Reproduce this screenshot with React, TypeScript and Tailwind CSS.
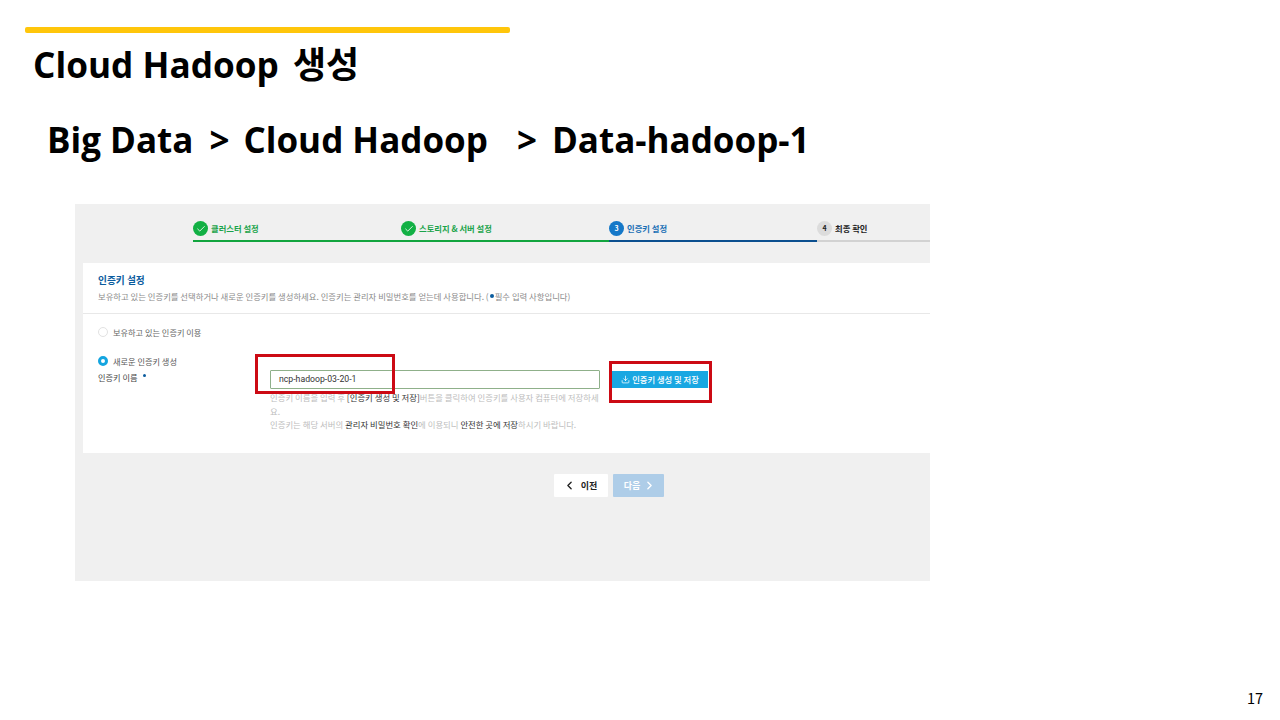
import { Check, ChevronLeft, ChevronRight, Download } from 'lucide-react';

const font = { fontFamily: '"Noto Sans CJK KR", sans-serif' };
const headFont = { fontFamily: '"Open Sans", "Noto Sans CJK KR", sans-serif' };

function Step({ label, state, num }: { label: string; state: 'done' | 'active' | 'todo'; num?: number }) {
  const line = state === 'done' ? 'border-[#12a53f]' : state === 'active' ? 'border-[#0b4f8f]' : 'border-[#d2d2d2]';
  const text = state === 'done' ? 'text-[#1aa34a]' : state === 'active' ? 'text-[#1a6fb5]' : 'text-[#222]';
  return (
    <div className={`flex h-[38px] w-[208px] shrink-0 items-start gap-[3px] border-b-2 pt-[17px] ${line}`}>
      {state === 'done' ? (
        <span className="flex h-[15px] w-[15px] items-center justify-center rounded-full bg-[#12b044] text-white">
          <Check size={10} strokeWidth={2} />
        </span>
      ) : (
        <span className={`flex h-[15px] w-[15px] items-center justify-center rounded-full text-[7px] font-bold ${state === 'active' ? 'bg-[#1578c8] text-white' : 'bg-[#dcdcdc] text-[#222]'}`}>
          {num}
        </span>
      )}
      <span className={`text-[8.3px] leading-[15px] font-bold ${text}`}>{label}</span>
    </div>
  );
}

export default function App() {
  return (
    <div className="relative h-[720px] w-[1280px] overflow-hidden bg-white" style={font}>
      <div className="ml-[25px] h-[33px] pt-[27px]">
        <div className="h-[6px] w-[485px] rounded-[2px] bg-[#ffc60b]"></div>
      </div>

      <h1 className="mt-[9px] ml-[33px] text-[35.2px] leading-[44px] font-bold whitespace-pre text-black" style={headFont}>
        Cloud Hadoop <span className="ml-[5px] text-[36px]">생성</span>
      </h1>
      <h2 className="mt-[31px] ml-[47px] flex text-[35px] leading-[44px] font-bold whitespace-pre text-black" style={headFont}>
        <span>Big Data</span>
        <span className="ml-[16px]">&gt;</span>
        <span className="ml-[14px]">Cloud Hadoop</span>
        <span className="ml-[29px]">&gt;</span>
        <span className="ml-[15px]">Data-hadoop-1</span>
      </h2>

      <div className="mt-[42px] ml-[75px] h-[377px] w-[855px] overflow-hidden bg-[#f0f0f0]">
        <div className="flex pl-[118px]">
          <Step label="클러스터 설정" state="done" />
          <Step label="스토리지 & 서버 설정" state="done" />
          <Step label="인증키 설정" state="active" num={3} />
          <Step label="최종 확인" state="todo" num={4} />
        </div>

        <div className="mt-[21px] ml-[8px] h-[190px] bg-white">
          <div className="h-[51px] border-b border-[#e8e8e8] pt-[10px] pl-[15px]">
            <div className="text-[9.7px] leading-[15px] font-bold text-[#0b5c9e]">인증키 설정</div>
            <div className="mt-[1px] flex items-center text-[8.35px] leading-[14px] text-[#8a8a8a]">
              보유하고 있는 인증키를 선택하거나 새로운 인증키를 생성하세요. 인증키는 관리자 비밀번호를 얻는데 사용합니다. (
              <span className="mx-[1px] h-[4px] w-[4px] rounded-full bg-[#0b5c9e]"></span>
              필수 입력 사항입니다)
            </div>
          </div>

          <div className="flex h-[36px] items-center gap-[5px] pl-[15px]">
            <span className="h-[10px] w-[10px] rounded-full border border-[#e2e2e2] bg-white"></span>
            <span className="text-[8.2px] text-[#666]">보유하고 있는 인증키 이용</span>
          </div>

          <div className="relative flex">
            <div className="w-[187px] pt-[4px] pl-[15px]">
              <div className="flex h-[14px] items-center gap-[5px]">
                <span className="h-[10px] w-[10px] rounded-full border-[3px] border-[#14a5e0] bg-white"></span>
                <span className="text-[8.2px] text-[#555]">새로운 인증키 생성</span>
              </div>
              <div className="mt-[2px] flex h-[14px] items-center gap-[5px] text-[8.2px] text-[#444]">
                인증키 이름 <span className="mb-[3px] h-[3px] w-[3px] rounded-full bg-[#0b5c9e]"></span>
              </div>
            </div>

            <div className="w-[330px] pt-[20px]">
              <div className="flex h-[19px] items-center rounded-[1px] border border-[#8fb08a] pl-[8px] text-[8.7px] text-[#333]" style={{ fontFamily: 'Roboto, sans-serif' }}>
                ncp-hadoop-03-20-1
              </div>
              <div className="mt-[2px] text-[8.4px] leading-[13.5px] whitespace-nowrap text-[#bdbdbd]">
                인증키 이름을 입력 후 <span className="text-[#333]">[인증키 생성 및 저장]</span>버튼을 클릭하여 인증키를 사용자 컴퓨터에 저장하세
                <br />
                요.
                <br />
                인증키는 해당 서버의 <span className="text-[#333]">관리자 비밀번호 확인</span>에 이용되니 <span className="text-[#333]">안전한 곳에 저장</span>하시기 바랍니다.
              </div>
            </div>

            <div className="ml-[12px] pt-[21px]">
              <div className="flex h-[17px] w-[96px] items-center justify-center gap-[2px] bg-[#19a7e2] text-[8.3px] font-medium text-white">
                <Download size={9} strokeWidth={2} />
                인증키 생성 및 저장
              </div>
            </div>

            <div className="absolute top-[4px] left-[172px] h-[40px] w-[140px] border-[3px] border-[#cc0a14]"></div>
            <div className="absolute top-[11px] left-[526px] h-[42px] w-[103px] border-[3px] border-[#cc0a14]"></div>
          </div>
        </div>

        <div className="mt-[21px] flex gap-[5px] pl-[479px]">
          <div className="flex h-[23px] w-[54px] items-center justify-center gap-[5px] rounded-[1px] bg-white pr-[2px] text-[9px] font-bold text-[#222]">
            <ChevronLeft size={13} strokeWidth={2.5} />
            이전
          </div>
          <div className="flex h-[23px] w-[51px] items-center justify-center gap-[3px] rounded-[1px] bg-[#aecde8] pl-[3px] text-[9px] font-bold text-white">
            다음
            <ChevronRight size={13} strokeWidth={2.5} />
          </div>
        </div>
      </div>

      <div className="absolute right-[17px] bottom-[12px] text-[14.5px] leading-[20px] text-black">17</div>
    </div>
  );
}
